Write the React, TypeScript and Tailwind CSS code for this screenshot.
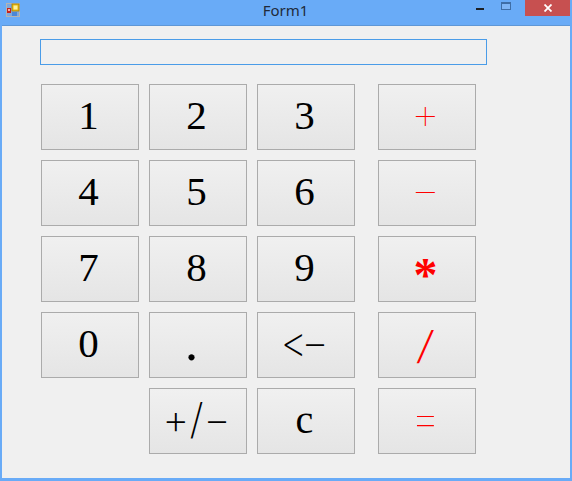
import React from 'react';

const keyClass =
  "w-[98px] h-[66px] flex items-center justify-center border border-[#ababab] bg-gradient-to-b from-[#f0f0f0] to-[#e5e5e5] leading-none text-black";
const opClass =
  "w-[98px] h-[66px] flex items-center justify-center border border-[#ababab] bg-gradient-to-b from-[#f0f0f0] to-[#e5e5e5] leading-none text-[#ff0000]";
const serif = "font-['Liberation_Serif',serif]";
const inter = "font-['Inter',sans-serif]";

const AppIcon = () => (
  <svg width="14" height="14" viewBox="0 0 14 14" className="shrink-0">
    <rect x="0.5" y="0.5" width="13" height="13" fill="#7fa9dc" stroke="#b4b4b4" />
    <rect x="6" y="1" width="7" height="7" fill="#e9b90f" stroke="#a87f00" strokeWidth="0.8" />
    <rect x="7.5" y="2.5" width="4" height="4" fill="#fff09a" />
    <rect x="1" y="5" width="4" height="5" fill="#c8201a" />
    <rect x="2" y="6" width="2" height="2" fill="#f4b0a8" />
    <rect x="6" y="9" width="5" height="4" fill="#4a86d8" />
  </svg>
);

export default function App() {
  const digits = ['1', '2', '3', '4', '5', '6', '7', '8', '9', '0'];

  return (
    <div className="w-[572px] h-[481px] flex flex-col bg-[#69abf7] overflow-hidden font-['Liberation_Sans',sans-serif]">
      <div className="h-[25px] flex items-start shrink-0">
        <div className="ml-[6px] mt-[3px]">
          <AppIcon />
        </div>
        <div className="flex-1 text-center text-[15px] leading-[20px] text-[#1f2a3a] font-['Noto_Sans',sans-serif] pl-[76px]">
          Form1
        </div>
        <div className="w-[10px] flex justify-center mt-[8px]">
          <div className="w-[8px] h-[2px] bg-[#1c2026]" />
        </div>
        <div className="ml-[16px] mt-[2px] w-[10px] h-[8px] border border-[#3f6ea6] border-t-2 bg-[#7fb5f5]" />
        <div className="ml-[14px] w-[45px] h-[16px] bg-[#c75050] flex items-center justify-center">
          <svg width="8" height="8" viewBox="0 0 8 8">
            <path d="M0.5 0.5L7.5 7.5M7.5 0.5L0.5 7.5" stroke="#fff" strokeWidth="1.8" />
          </svg>
        </div>
        <div className="w-[2px]" />
      </div>

      <div className="flex-1 mx-[2px] mb-[3px] border-t border-[#5f97d6] bg-[#f0f0f0] pt-[13px] pl-[38px] flex flex-col">
        <div className="w-[447px] h-[26px] border border-[#4a9ce8] bg-[#f0f0f0]" />
        <div className="flex mt-[19px] ml-[1px] gap-[23px]">
          <div className="grid grid-cols-[98px_98px_98px] gap-[10px]">
            {digits.map((d) => (
              <button key={d} className={`${keyClass} ${serif} text-[41px] pr-[3px] pb-[3px]`}>{d}</button>
            ))}
            <button className={`${keyClass} ${serif} text-[52px] pr-[13px] pb-[4px]`}>.</button>
            <button className={`${keyClass} ${inter} font-extralight text-[42px] tracking-[-6px] pr-[9px] pb-[6px]`}>&lt;−</button>
            <div />
            <button className={`${keyClass} ${inter} font-extralight text-[42px] pr-[3px] pb-[4px]`}>+/−</button>
            <button className={`${keyClass} ${serif} text-[40px] pr-[3px] pb-[2px]`}>c</button>
          </div>
          <div className="flex flex-col gap-[10px]">
            <button className={`${opClass} ${inter} font-thin text-[46px] pr-[3px] pb-[8px]`}>+</button>
            <button className={`${opClass} ${inter} font-thin text-[46px] pr-[3px] pb-[8px]`}>−</button>
            <button className={`${opClass} ${serif} text-[48px] font-bold pr-[3px] pt-[12px]`}>*</button>
            <button className={`${opClass} ${inter} font-light text-[38px] pr-[3px]`}>
              <span className="inline-block skew-x-[-10deg]">/</span>
            </button>
            <button className={`${opClass} ${inter} font-thin text-[50px] pr-[3px] pb-[8px]`}>=</button>
          </div>
        </div>
      </div>
    </div>
  );
}
